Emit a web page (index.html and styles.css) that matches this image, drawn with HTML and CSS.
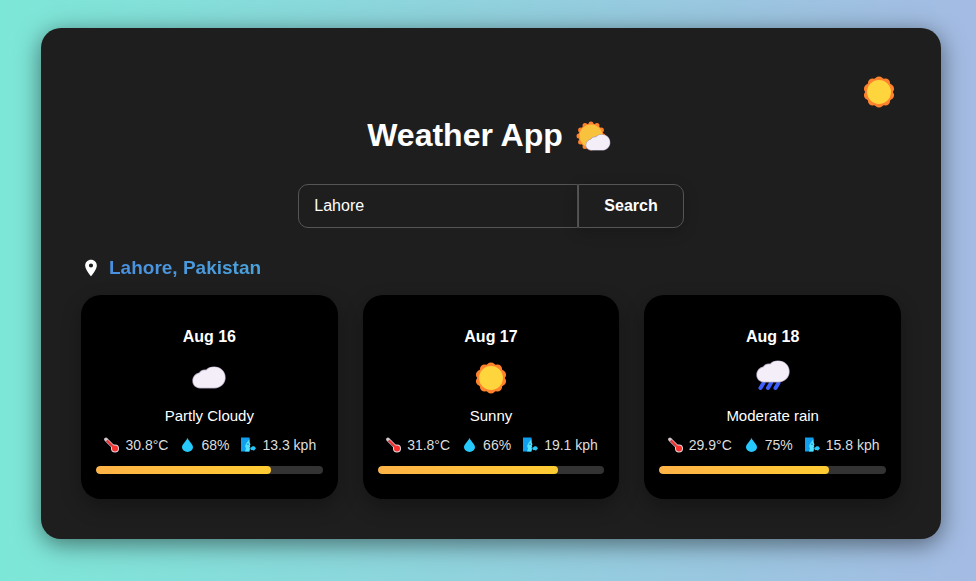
FILE: index.html
```html
<!DOCTYPE html>
<html lang="en">
<head>
<meta charset="utf-8">
<meta name="viewport" content="width=device-width, initial-scale=1">
<title>Weather App</title>
<link rel="stylesheet" href="styles.css">
</head>
<body>
<svg class="sprite" aria-hidden="true">
  <defs>
    <symbol id="sun" viewBox="0 0 32 32">
      <circle cx="16" cy="16" r="14" fill="#ff822d"/>
      <circle cx="16" cy="16" r="11" fill="none" stroke="#ff822d" stroke-width="9.200" stroke-linecap="round" pathLength="10" stroke-dasharray="0 1" transform="rotate(-90 16 16)"/>
      <circle cx="16" cy="16" r="11.900" fill="#ffd53d"/>
    </symbol>
    <symbol id="cloud" viewBox="0 0 34 23">
      <path d="M8 22.400C3.400 22.400.3 19 .3 15c0-4.200 2.800-7.500 6.700-8.400C8.500 4.300 11 3 14 3.600 15.800 1.500 18.600.4 22 .4c6.600 0 11.700 4.800 11.700 11.100S28.700 22.400 22.500 22.400Z" fill="#a79cb5"/>
      <path d="M8 21.700C4.100 21.700 1 18.700 1 15c0-4 2.700-7 6.500-7.700C9 5 11.400 3.900 14.300 4.500 16 2.200 18.700 1.100 22 1.100c6.200 0 11 4.400 11 10.400S28.200 21.700 22.500 21.700Z" fill="#f3eef8"/>
    </symbol>
    <symbol id="thermometer" viewBox="0 0 19 18">
      <path d="M4 3.500 12.500 12" stroke="#d3c6cf" stroke-width="3.800" stroke-linecap="round"/>
      <circle cx="13" cy="12.500" r="4" fill="#e5d5dc"/>
      <path d="M5.500 5 12.500 12" stroke="#f8312f" stroke-width="2.200" stroke-linecap="round"/>
      <circle cx="13" cy="12.500" r="3" fill="#f8312f"/>
      <path d="M4 5.200 9 10.200" stroke="#7d3440" stroke-width="1" stroke-dasharray="1 1"/>
    </symbol>
    <symbol id="drop" viewBox="0 0 19 18">
      <path d="M9.500 1.800C10.300 5 15 8 15 11.300a5.500 4.700 0 0 1-11 0C4 8 8.700 5 9.500 1.800Z" fill="#26c9fc"/>
    </symbol>
    <symbol id="wind" viewBox="0 0 19 18">
      <path d="M2 1.500h8.500v14H2Z" fill="#0f9fee"/>
      <path d="M10.500 3v3l1 2.500-.8 1 .5 1.300-.8.8.6 1.200-.7 2.700H6l1-3-1-2.500 1.500-3Z" fill="#50e2ff"/>
      <path d="M8.200 8.200h1.600" stroke="#0074ba" stroke-width="1"/>
      <path d="M11.200 11.500c1.200.4 1.500-1.800 3.200-1.300 1-.3 1.600.5 1.600 1.100 1.200.3 1.200 1.800 0 2-.3 1.600-1.900 1.500-2.600.8-1.200.4-2.200-.5-2.200-2.600Z" fill="#26c9fc"/>
    </symbol>
  </defs>
</svg>

<main class="app">
  <div class="toolbar">
    <button class="theme-toggle" type="button" aria-label="Toggle theme"><svg width="32" height="32"><use href="#sun"/></svg></button>
  </div>

  <h1 class="title">Weather App
    <svg width="44" height="38" viewBox="0 0 44 38" aria-hidden="true">
      <circle cx="20" cy="20" r="12.500" fill="#ff822d"/>
      <circle cx="20" cy="20" r="12" fill="none" stroke="#ff822d" stroke-width="5" stroke-linecap="round" pathLength="12" stroke-dasharray="0 1" transform="rotate(-90 20 20)"/>
      <circle cx="20" cy="20" r="11.500" fill="#f9c23c"/>
      <use href="#cloud" x="14" y="18" width="26" height="17"/>
    </svg>
  </h1>

  <form class="search" onsubmit="return false">
    <input class="search-input" type="text" value="Lahore" aria-label="City">
    <button class="search-button" type="submit">Search</button>
  </form>

  <h2 class="location">
    <svg width="20" height="20" viewBox="0 0 24 24" aria-hidden="true"><path fill="#fff" d="M12 2C8.130 2 5 5.130 5 9c0 5.250 7 13 7 13s7-7.750 7-13c0-3.870-3.130-7-7-7zm0 9.500a2.500 2.500 0 0 1 0-5 2.500 2.500 0 0 1 0 5z"/></svg>
    <span class="place">Lahore, Pakistan</span>
  </h2>

  <section class="forecast">
    <article class="card">
      <h3 class="date">Aug 16</h3>
      <svg class="condition" width="44" height="36" viewBox="0 0 44 36" aria-hidden="true"><use href="#cloud" x="5" y="6" width="34" height="23"/></svg>
      <p class="summary">Partly Cloudy</p>
      <ul class="stats">
        <li><svg width="19" height="18"><use href="#thermometer"/></svg>30.8°C</li>
        <li><svg width="19" height="18"><use href="#drop"/></svg>68%</li>
        <li><svg width="19" height="18"><use href="#wind"/></svg>13.3 kph</li>
      </ul>
      <div class="bar"><div class="bar-fill" style="width: 77%"></div></div>
    </article>
    <article class="card">
      <h3 class="date">Aug 17</h3>
      <svg class="condition" width="44" height="36" viewBox="0 0 44 36" aria-hidden="true"><use href="#sun" x="6" y="2" width="32" height="32"/></svg>
      <p class="summary">Sunny</p>
      <ul class="stats">
        <li><svg width="19" height="18"><use href="#thermometer"/></svg>31.8°C</li>
        <li><svg width="19" height="18"><use href="#drop"/></svg>66%</li>
        <li><svg width="19" height="18"><use href="#wind"/></svg>19.1 kph</li>
      </ul>
      <div class="bar"><div class="bar-fill" style="width: 79.5%"></div></div>
    </article>
    <article class="card">
      <h3 class="date">Aug 18</h3>
      <svg class="condition" width="44" height="36" viewBox="0 0 44 36" aria-hidden="true">
        <path d="m12.500 23-3 5M20 23l-3 5M27.500 23l-3 5" stroke="#3f5fff" stroke-width="4" stroke-linecap="round"/>
        <use href="#cloud" x="5" y="0" width="34" height="23"/>
      </svg>
      <p class="summary">Moderate rain</p>
      <ul class="stats">
        <li><svg width="19" height="18"><use href="#thermometer"/></svg>29.9°C</li>
        <li><svg width="19" height="18"><use href="#drop"/></svg>75%</li>
        <li><svg width="19" height="18"><use href="#wind"/></svg>15.8 kph</li>
      </ul>
      <div class="bar"><div class="bar-fill" style="width: 74.75%"></div></div>
    </article>
  </section>
</main>
</body>
</html>
```
FILE: styles.css
```css
* {
  box-sizing: border-box;
  margin: 0;
}

body {
  min-height: 100vh;
  padding: 28px 35px 42px 41px;
  background: linear-gradient(to right, #7de7d7, #a4bbe3);
  color: #fff;
  font-family: "Liberation Sans", Arial, sans-serif;
  font-size: 16px;
}

.sprite {
  position: absolute;
  width: 0;
  height: 0;
}

.app {
  max-width: 900px;
  margin: 0 auto;
  padding: 40px;
  border-radius: 20px;
  background: #1e1e1e;
  box-shadow: 0 5px 25px rgba(0, 0, 0, 0.5);
}

.toolbar {
  display: flex;
  justify-content: flex-end;
}

.theme-toggle {
  display: flex;
  padding: 8px 6px;
  border: 0;
  background: none;
  cursor: pointer;
}

.title {
  display: flex;
  justify-content: center;
  align-items: center;
  gap: 8px;
  font-size: 32px;
  line-height: 38px;
}

.search {
  display: flex;
  justify-content: center;
  margin-top: 30px;
}

.search-input,
.search-button {
  height: 44px;
  border: 1px solid #555;
  background: #1e1e1e;
  color: #fff;
  font-family: inherit;
  font-size: 16px;
}

.search-input {
  width: 280px;
  padding: 0 15px;
  border-radius: 10px 0 0 10px;
  outline: 0;
}

.search-button {
  padding: 0 25px;
  border-radius: 0 10px 10px 0;
  box-shadow: 0 4px 15px rgba(0, 0, 0, 0.2);
  font-weight: bold;
  cursor: pointer;
}

.location {
  display: flex;
  align-items: center;
  gap: 8px;
  margin: 28px 0 15px;
  font-size: 19px;
  line-height: 24px;
}

.place {
  background: linear-gradient(to right, #4a90e2, #4ba2db);
  background-clip: text;
  -webkit-background-clip: text;
  color: transparent;
}

.forecast {
  display: grid;
  grid-template-columns: repeat(3, 1fr);
  gap: 25px;
}

.card {
  display: flex;
  flex-direction: column;
  align-items: center;
  padding: 32px 15px 25px;
  border-radius: 20px;
  background: #000;
  box-shadow: 0 8px 20px rgba(0, 0, 0, 0.3);
}

.date {
  font-size: 16px;
  line-height: 20px;
}

.condition {
  margin: 13px 0 10px;
}

.summary {
  font-size: 15px;
  line-height: 20px;
}

.stats {
  display: flex;
  gap: 10px;
  margin: 9px 0 11px;
  padding: 0;
  color: #ddd;
  font-size: 14px;
  line-height: 20px;
  list-style: none;
  white-space: nowrap;
}

.stats li {
  display: flex;
  align-items: center;
  gap: 4px;
}

.bar {
  width: 100%;
  height: 8px;
  border-radius: 5px;
  background: #333;
  overflow: hidden;
}

.bar-fill {
  height: 100%;
  border-radius: 5px;
  background: linear-gradient(to right, #ffb347, #ffcc33);
}
```
